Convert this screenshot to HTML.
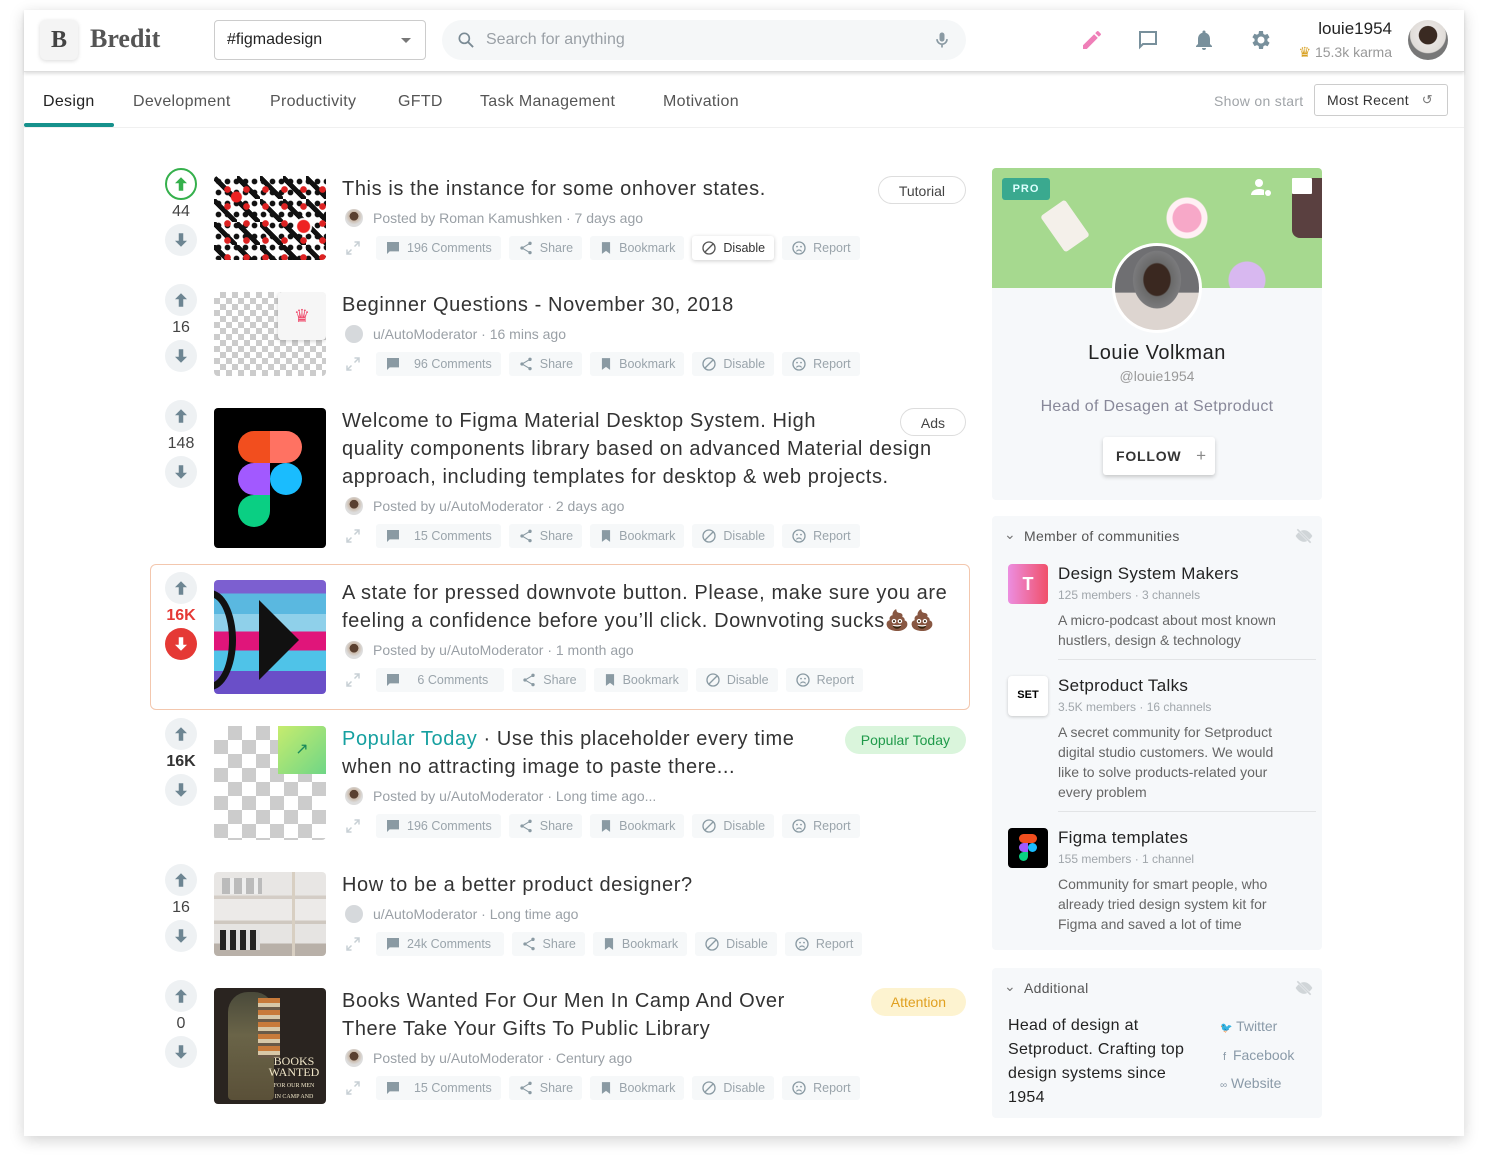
<!DOCTYPE html>
<html><head><meta charset="utf-8"><style>
*{box-sizing:border-box;margin:0;padding:0}
body{width:1488px;height:1176px;background:#fff;font-family:"Liberation Sans",sans-serif;position:relative;overflow:hidden;color:#333}
.frame{position:absolute;left:24px;top:10px;width:1440px;height:1126px;background:#fff;box-shadow:0 4px 14px rgba(0,0,0,.18)}
.abs{position:absolute}
.hdr{position:absolute;left:0;top:0;width:1440px;height:62px;border-bottom:1px solid #ddd;box-shadow:0 2px 3px rgba(0,0,0,.12);background:#fff}
.tabs span{position:absolute;top:83px;font-size:16px;color:#555;letter-spacing:.3px}
.post{position:absolute;left:150px;width:820px}
.vote{position:absolute;left:15px;width:32px;text-align:center}
.vbtn{width:32px;height:32px;border-radius:50%;background:#eef1f3;display:flex;align-items:center;justify-content:center}
.cnt{height:24px;line-height:24px;font-size:16px;color:#444;margin:0}
.thumb{position:absolute;left:64px;top:0;width:112px;border-radius:4px;overflow:hidden}
.body{position:absolute;left:192px;top:-1px}
.title{font-size:20px;line-height:28px;color:#333;letter-spacing:.6px;white-space:nowrap}
.meta{margin-top:2px;height:26px;display:flex;align-items:center;font-size:14px;color:#9aa0a6;white-space:nowrap}
.av{width:18px;height:18px;border-radius:50%;background:radial-gradient(circle at 50% 40%,#5a4030 30%,#c9b8a8 32%,#ddd 60%);margin-right:10px;margin-left:3px}
.av.g{background:#d6d9dc}
.acts{margin-top:5px;height:24px;display:flex;align-items:center;font-size:12.5px;color:#9aa4ab;white-space:nowrap}
.pill{height:24px;border-radius:3px;background:#f6f8f9;display:flex;align-items:center;padding:0 9px;margin-right:8px;gap:6px;white-space:nowrap}
.pill svg{fill:#8a9aa3}
.tag{position:absolute;right:4px;height:28px;border-radius:14px;padding:0 20px;font-size:14px;line-height:28px}
.chk{background:conic-gradient(#ccc 25%,#fff 0 50%,#ccc 0 75%,#fff 0)}
.card{position:absolute;background:#f6f8fa}
.comm{position:absolute;left:16px}
.clogo{position:absolute;left:0;width:40px;height:40px;border-radius:4px}
.cname{position:absolute;left:50px;font-size:17px;color:#222;white-space:nowrap;letter-spacing:.3px}
.cmeta{position:absolute;left:50px;font-size:12px;color:#a0a6ab;white-space:nowrap}
.cdesc{position:absolute;left:50px;font-size:14px;line-height:20px;color:#666;width:240px}
</style></head><body>
<div class="frame">
 <div class="hdr">
  <div class="abs" style="left:16px;top:10px;width:38px;height:40px;border-radius:6px;background:#f4f4f4;box-shadow:0 1px 4px rgba(0,0,0,.15);font:bold 24px 'Liberation Serif',serif;color:#444;text-align:center;line-height:40px">B</div>
  <div class="abs" style="left:66px;top:14px;font:bold 26px 'Liberation Serif',serif;color:#555">Bredit</div>
  <div class="abs" style="left:190px;top:10px;width:212px;height:40px;border:1px solid #ccc;border-radius:4px;font-size:16px;line-height:38px;padding-left:12px;color:#222">#figmadesign<span class="abs" style="right:14px;top:17px;border:5px solid transparent;border-top-color:#777;border-bottom:0"></span></div>
  <div class="abs" style="left:418px;top:10px;width:524px;height:40px;border-radius:20px;background:#f5f7f8;font-size:16px;line-height:40px;padding-left:44px;color:#9aa0a6">Search for anything
   <svg class="abs" style="left:14px;top:10px" width="20" height="20" viewBox="0 0 24 24"><circle cx="10" cy="10" r="6" fill="none" stroke="#7a8a94" stroke-width="2"/><path d="M14.5 14.5l6 6" stroke="#7a8a94" stroke-width="2.2"/></svg>
   <svg class="abs" style="right:14px;top:10px" width="20" height="20" viewBox="0 0 24 24"><rect x="9" y="3" width="6" height="11" rx="3" fill="#8a9aa3"/><path d="M6 11a6 6 0 0 0 12 0M12 17v4" fill="none" stroke="#8a9aa3" stroke-width="2"/></svg></div>
  <svg class="abs" style="left:1056px;top:18px" width="24" height="24" viewBox="0 0 24 24"><path d="M3 17.2V21h3.8L17.8 9.9 14.1 6.2zM20.7 7a1 1 0 0 0 0-1.4l-2.3-2.3a1 1 0 0 0-1.4 0l-1.8 1.8 3.7 3.7z" fill="#ef7fb8"/></svg>
  <svg class="abs" style="left:1112px;top:18px" width="24" height="24" viewBox="0 0 24 24"><path d="M4 4h16v12H7l-3 3z" fill="none" stroke="#78909c" stroke-width="2"/></svg>
  <svg class="abs" style="left:1168px;top:18px" width="24" height="24" viewBox="0 0 24 24"><path d="M12 22a2 2 0 0 0 2-2h-4a2 2 0 0 0 2 2zm6-6v-5c0-3-1.6-5.6-4.5-6.3V4a1.5 1.5 0 0 0-3 0v.7C7.6 5.4 6 8 6 11v5l-2 2v1h16v-1z" fill="#78909c"/></svg>
  <svg class="abs" style="left:1224px;top:18px" width="24" height="24" viewBox="0 0 24 24"><path d="M19.4 13a7.5 7.5 0 0 0 0-2l2.1-1.6-2-3.5-2.5 1a7 7 0 0 0-1.7-1L15 3h-4l-.4 2.7a7 7 0 0 0-1.7 1l-2.5-1-2 3.5L6.6 11a7.5 7.5 0 0 0 0 2l-2.1 1.6 2 3.5 2.5-1a7 7 0 0 0 1.7 1L11 21h4l.4-2.7a7 7 0 0 0 1.7-1l2.5 1 2-3.5zM13 15.5a3.5 3.5 0 1 1 0-7 3.5 3.5 0 0 1 0 7z" fill="#78909c"/></svg>
  <div class="abs" style="right:72px;top:9px;font-size:17px;color:#222">louie1954</div>
  <div class="abs" style="right:72px;top:34px;font-size:14px;color:#999"><span style="color:#d8a020">♛</span> 15.3k karma</div>
  <div class="abs" style="left:1384px;top:10px;width:40px;height:40px;border-radius:50%;background:radial-gradient(circle at 50% 38%,#3a2a22 28%,#e8e4e2 30%,#e0dcd8 55%,#777 58%)"></div>
 </div>
 <div class="tabs">
  <span style="left:19px;color:#222">Design</span><span style="left:109px">Development</span><span style="left:246px">Productivity</span><span style="left:374px">GFTD</span><span style="left:456px">Task Management</span><span style="left:639px">Motivation</span>
 </div>
 <div class="abs" style="left:0;top:113px;width:90px;height:4px;background:#16918c;border-radius:2px"></div>
 <div class="abs" style="left:0;top:117px;width:1440px;height:1px;background:#f0f0f0"></div>
 <div class="abs" style="left:1190px;top:83px;font-size:14px;color:#a0a4a8;letter-spacing:.3px">Show on start</div>
 <div class="abs" style="left:1290px;top:74px;width:134px;height:32px;border:1px solid #ccc;border-radius:3px;font-size:14px;line-height:30px;padding-left:12px;color:#333;letter-spacing:.3px">Most Recent <span style="position:absolute;right:14px;color:#777;font-size:13px">↺</span></div>
</div>

<!-- post 1 -->
<div class="post" style="top:176px">
 <div class="vote" style="top:-8px"><div class="vbtn" style="border:2px solid #35b04c;background:#fff"><svg width="18" height="18" viewBox="0 0 24 24"><path d="M12 3l-8 8h5v10h6V11h5z" fill="#35b04c"/></svg></div><div class="cnt">44</div><div class="vbtn"><svg width="18" height="18" viewBox="0 0 24 24"><path d="M12 21l8-8h-5V3H9v10H4z" fill="#6d8592"/></svg></div></div>
 <div class="thumb" style="height:84px;background:radial-gradient(circle at 20% 25%,#e22 5px,transparent 6px),radial-gradient(circle at 80% 60%,#e22 6px,#fff 7px,#fff 8px,transparent 9px),radial-gradient(circle,#d22 3px,transparent 3.6px) 4px 5px/19px 17px,radial-gradient(circle,#111 2.5px,transparent 3.2px) 0 0/9px 11px,linear-gradient(45deg,transparent 40%,#111 40% 55%,transparent 55%) 0 0/23px 23px,#fff"></div>
 <div class="body"><div class="title">This is the instance for some onhover states.</div>
  <div class="meta"><div class="av"></div>Posted by Roman Kamushken · 7 days ago</div>
  <div class="acts"><svg width="18" height="18" viewBox="0 0 24 24" style="margin:0 14px 0 2px"><path d="M14 4h6v6M20 4l-6 6M10 20H4v-6M4 20l6-6" stroke="#c8d0d5" stroke-width="2" fill="none"/></svg>
   <div class="pill"><svg width="16" height="16" viewBox="0 0 24 24"><path d="M3 3h18v14H7l-4 4z"/></svg>196 Comments</div>
   <div class="pill"><svg width="16" height="16" viewBox="0 0 24 24"><circle cx="18" cy="5" r="2.5"/><circle cx="6" cy="12" r="2.5"/><circle cx="18" cy="19" r="2.5"/><path d="M18 5L6 12l12 7" stroke="#8a9aa3" stroke-width="1.6" fill="none"/></svg>Share</div>
   <div class="pill"><svg width="14" height="16" viewBox="0 0 24 24"><path d="M5 2h14v20l-7-5-7 5z"/></svg>Bookmark</div>
   <div class="pill" style="background:#fff;box-shadow:0 1px 4px rgba(0,0,0,.2);color:#333"><svg width="16" height="16" viewBox="0 0 24 24"><circle cx="12" cy="12" r="9" fill="none" stroke="#555" stroke-width="2"/><path d="M6 18L18 6" stroke="#555" stroke-width="2"/></svg>Disable</div>
   <div class="pill"><svg width="16" height="16" viewBox="0 0 24 24"><circle cx="12" cy="12" r="9" fill="none" stroke="#8a9aa3" stroke-width="2"/><circle cx="9" cy="10" r="1.3"/><circle cx="15" cy="10" r="1.3"/><path d="M8 17q4-4 8 0" stroke="#8a9aa3" stroke-width="1.6" fill="none"/></svg>Report</div></div>
 </div>
 <div class="tag" style="top:0;border:1px solid #ddd;color:#444">Tutorial</div>
</div>

<!-- post 2 -->
<div class="post" style="top:292px">
 <div class="vote" style="top:-8px"><div class="vbtn"><svg width="18" height="18" viewBox="0 0 24 24"><path d="M12 3l-8 8h5v10h6V11h5z" fill="#6d8592"/></svg></div><div class="cnt">16</div><div class="vbtn"><svg width="18" height="18" viewBox="0 0 24 24"><path d="M12 21l8-8h-5V3H9v10H4z" fill="#6d8592"/></svg></div></div>
 <div class="thumb chk" style="height:84px;background-size:12px 12px"><div class="abs" style="left:64px;top:0;width:48px;height:48px;background:#f6f6f6;border-radius:4px;box-shadow:0 1px 4px rgba(0,0,0,.2);color:#ef4f6f;text-align:center;line-height:48px;font-size:18px">♛</div></div>
 <div class="body"><div class="title">Beginner Questions - November 30, 2018</div>
  <div class="meta"><div class="av g"></div>u/AutoModerator · 16 mins ago</div>
  <div class="acts"><svg width="18" height="18" viewBox="0 0 24 24" style="margin:0 14px 0 2px"><path d="M14 4h6v6M20 4l-6 6M10 20H4v-6M4 20l6-6" stroke="#c8d0d5" stroke-width="2" fill="none"/></svg>
   <div class="pill"><svg width="16" height="16" viewBox="0 0 24 24"><path d="M3 3h18v14H7l-4 4z"/></svg>&nbsp;&nbsp;96 Comments</div>
   <div class="pill"><svg width="16" height="16" viewBox="0 0 24 24"><circle cx="18" cy="5" r="2.5"/><circle cx="6" cy="12" r="2.5"/><circle cx="18" cy="19" r="2.5"/><path d="M18 5L6 12l12 7" stroke="#8a9aa3" stroke-width="1.6" fill="none"/></svg>Share</div>
   <div class="pill"><svg width="14" height="16" viewBox="0 0 24 24"><path d="M5 2h14v20l-7-5-7 5z"/></svg>Bookmark</div>
   <div class="pill"><svg width="16" height="16" viewBox="0 0 24 24"><circle cx="12" cy="12" r="9" fill="none" stroke="#8a9aa3" stroke-width="2"/><path d="M6 18L18 6" stroke="#8a9aa3" stroke-width="2"/></svg>Disable</div>
   <div class="pill"><svg width="16" height="16" viewBox="0 0 24 24"><circle cx="12" cy="12" r="9" fill="none" stroke="#8a9aa3" stroke-width="2"/><circle cx="9" cy="10" r="1.3"/><circle cx="15" cy="10" r="1.3"/><path d="M8 17q4-4 8 0" stroke="#8a9aa3" stroke-width="1.6" fill="none"/></svg>Report</div></div>
 </div>
</div>

<!-- post 3 -->
<div class="post" style="top:408px">
 <div class="vote" style="top:-8px"><div class="vbtn"><svg width="18" height="18" viewBox="0 0 24 24"><path d="M12 3l-8 8h5v10h6V11h5z" fill="#6d8592"/></svg></div><div class="cnt">148</div><div class="vbtn"><svg width="18" height="18" viewBox="0 0 24 24"><path d="M12 21l8-8h-5V3H9v10H4z" fill="#6d8592"/></svg></div></div>
 <div class="thumb" style="height:140px;background:#000">
  <div class="abs" style="left:24px;top:23px;width:32px;height:32px;background:#f24e1e;border-radius:16px 0 0 16px"></div>
  <div class="abs" style="left:56px;top:23px;width:32px;height:32px;background:#ff7262;border-radius:0 16px 16px 0"></div>
  <div class="abs" style="left:24px;top:55px;width:32px;height:32px;background:#a259ff;border-radius:16px 0 0 16px"></div>
  <div class="abs" style="left:56px;top:55px;width:32px;height:32px;background:#1abcfe;border-radius:50%"></div>
  <div class="abs" style="left:24px;top:87px;width:32px;height:32px;background:#0acf83;border-radius:16px 0 16px 16px"></div>
 </div>
 <div class="body"><div class="title">Welcome to Figma Material Desktop System. High<br>quality components library based on advanced Material design<br>approach, including templates for desktop &amp; web projects.</div>
  <div class="meta"><div class="av"></div>Posted by u/AutoModerator · 2 days ago</div>
  <div class="acts"><svg width="18" height="18" viewBox="0 0 24 24" style="margin:0 14px 0 2px"><path d="M14 4h6v6M20 4l-6 6M10 20H4v-6M4 20l6-6" stroke="#c8d0d5" stroke-width="2" fill="none"/></svg>
   <div class="pill"><svg width="16" height="16" viewBox="0 0 24 24"><path d="M3 3h18v14H7l-4 4z"/></svg>&nbsp;&nbsp;15 Comments</div>
   <div class="pill"><svg width="16" height="16" viewBox="0 0 24 24"><circle cx="18" cy="5" r="2.5"/><circle cx="6" cy="12" r="2.5"/><circle cx="18" cy="19" r="2.5"/><path d="M18 5L6 12l12 7" stroke="#8a9aa3" stroke-width="1.6" fill="none"/></svg>Share</div>
   <div class="pill"><svg width="14" height="16" viewBox="0 0 24 24"><path d="M5 2h14v20l-7-5-7 5z"/></svg>Bookmark</div>
   <div class="pill"><svg width="16" height="16" viewBox="0 0 24 24"><circle cx="12" cy="12" r="9" fill="none" stroke="#8a9aa3" stroke-width="2"/><path d="M6 18L18 6" stroke="#8a9aa3" stroke-width="2"/></svg>Disable</div>
   <div class="pill"><svg width="16" height="16" viewBox="0 0 24 24"><circle cx="12" cy="12" r="9" fill="none" stroke="#8a9aa3" stroke-width="2"/><circle cx="9" cy="10" r="1.3"/><circle cx="15" cy="10" r="1.3"/><path d="M8 17q4-4 8 0" stroke="#8a9aa3" stroke-width="1.6" fill="none"/></svg>Report</div></div>
 </div>
 <div class="tag" style="top:0;border:1px solid #ddd;color:#444">Ads</div>
</div>

<!-- post 4 highlighted -->
<div class="abs" style="left:150px;top:564px;width:820px;height:146px;border:1px solid #f3c7ae;border-radius:6px"></div>
<div class="post" style="top:580px">
 <div class="vote" style="top:-8px"><div class="vbtn"><svg width="18" height="18" viewBox="0 0 24 24"><path d="M12 3l-8 8h5v10h6V11h5z" fill="#6d8592"/></svg></div><div class="cnt" style="color:#e53935;font-weight:bold">16K</div><div class="vbtn" style="background:#e53935"><svg width="18" height="18" viewBox="0 0 24 24"><path d="M12 21l8-8h-5V3H9v10H4z" fill="#fff"/></svg></div></div>
 <div class="thumb" style="height:114px;background:linear-gradient(180deg,#7c5fd0 0 12%,#5ab8e0 12% 30%,#8fd0ea 30% 45%,#e0157a 45% 62%,#4fc3e8 62% 80%,#6a4fc8 80%)">
  <div class="abs" style="left:-30px;top:10px;width:52px;height:100px;border:7px solid #111;border-radius:50%"></div>
  <div class="abs" style="left:45px;top:20px;width:0;height:0;border-top:40px solid transparent;border-bottom:40px solid transparent;border-left:40px solid #111"></div>
 </div>
 <div class="body"><div class="title">A state for pressed downvote button. Please, make sure you are<br>feeling a confidence before you’ll click. Downvoting sucks<span style="color:#8a5a2a;letter-spacing:0">💩💩</span></div>
  <div class="meta"><div class="av"></div>Posted by u/AutoModerator · 1 month ago</div>
  <div class="acts"><svg width="18" height="18" viewBox="0 0 24 24" style="margin:0 14px 0 2px"><path d="M14 4h6v6M20 4l-6 6M10 20H4v-6M4 20l6-6" stroke="#c8d0d5" stroke-width="2" fill="none"/></svg>
   <div class="pill"><svg width="16" height="16" viewBox="0 0 24 24"><path d="M3 3h18v14H7l-4 4z"/></svg>&nbsp;&nbsp;&nbsp;6 Comments&nbsp;&nbsp;</div>
   <div class="pill"><svg width="16" height="16" viewBox="0 0 24 24"><circle cx="18" cy="5" r="2.5"/><circle cx="6" cy="12" r="2.5"/><circle cx="18" cy="19" r="2.5"/><path d="M18 5L6 12l12 7" stroke="#8a9aa3" stroke-width="1.6" fill="none"/></svg>Share</div>
   <div class="pill"><svg width="14" height="16" viewBox="0 0 24 24"><path d="M5 2h14v20l-7-5-7 5z"/></svg>Bookmark</div>
   <div class="pill"><svg width="16" height="16" viewBox="0 0 24 24"><circle cx="12" cy="12" r="9" fill="none" stroke="#8a9aa3" stroke-width="2"/><path d="M6 18L18 6" stroke="#8a9aa3" stroke-width="2"/></svg>Disable</div>
   <div class="pill"><svg width="16" height="16" viewBox="0 0 24 24"><circle cx="12" cy="12" r="9" fill="none" stroke="#8a9aa3" stroke-width="2"/><circle cx="9" cy="10" r="1.3"/><circle cx="15" cy="10" r="1.3"/><path d="M8 17q4-4 8 0" stroke="#8a9aa3" stroke-width="1.6" fill="none"/></svg>Report</div></div>
 </div>
</div>

<!-- post 5 -->
<div class="post" style="top:726px">
 <div class="vote" style="top:-8px"><div class="vbtn"><svg width="18" height="18" viewBox="0 0 24 24"><path d="M12 3l-8 8h5v10h6V11h5z" fill="#6d8592"/></svg></div><div class="cnt" style="font-weight:bold;color:#333">16K</div><div class="vbtn"><svg width="18" height="18" viewBox="0 0 24 24"><path d="M12 21l8-8h-5V3H9v10H4z" fill="#6d8592"/></svg></div></div>
 <div class="thumb chk" style="height:114px;background-size:28px 28px"><div class="abs" style="left:64px;top:0;width:48px;height:48px;background:linear-gradient(135deg,#c6ec6e,#6fd686);color:#1a8a5a;text-align:center;line-height:48px;font-size:16px">↗</div></div>
 <div class="body"><div class="title"><span style="color:#16a0a0">Popular Today</span> · Use this placeholder every time<br>when no attracting image to paste there...</div>
  <div class="meta"><div class="av"></div>Posted by u/AutoModerator · Long time ago...</div>
  <div class="acts"><svg width="18" height="18" viewBox="0 0 24 24" style="margin:0 14px 0 2px"><path d="M14 4h6v6M20 4l-6 6M10 20H4v-6M4 20l6-6" stroke="#c8d0d5" stroke-width="2" fill="none"/></svg>
   <div class="pill"><svg width="16" height="16" viewBox="0 0 24 24"><path d="M3 3h18v14H7l-4 4z"/></svg>196 Comments</div>
   <div class="pill"><svg width="16" height="16" viewBox="0 0 24 24"><circle cx="18" cy="5" r="2.5"/><circle cx="6" cy="12" r="2.5"/><circle cx="18" cy="19" r="2.5"/><path d="M18 5L6 12l12 7" stroke="#8a9aa3" stroke-width="1.6" fill="none"/></svg>Share</div>
   <div class="pill"><svg width="14" height="16" viewBox="0 0 24 24"><path d="M5 2h14v20l-7-5-7 5z"/></svg>Bookmark</div>
   <div class="pill"><svg width="16" height="16" viewBox="0 0 24 24"><circle cx="12" cy="12" r="9" fill="none" stroke="#8a9aa3" stroke-width="2"/><path d="M6 18L18 6" stroke="#8a9aa3" stroke-width="2"/></svg>Disable</div>
   <div class="pill"><svg width="16" height="16" viewBox="0 0 24 24"><circle cx="12" cy="12" r="9" fill="none" stroke="#8a9aa3" stroke-width="2"/><circle cx="9" cy="10" r="1.3"/><circle cx="15" cy="10" r="1.3"/><path d="M8 17q4-4 8 0" stroke="#8a9aa3" stroke-width="1.6" fill="none"/></svg>Report</div></div>
 </div>
 <div class="tag" style="top:0;background:#daf5dc;color:#1f9a4a;padding:0 16px">Popular Today</div>
</div>

<!-- post 6 -->
<div class="post" style="top:872px">
 <div class="vote" style="top:-8px"><div class="vbtn"><svg width="18" height="18" viewBox="0 0 24 24"><path d="M12 3l-8 8h5v10h6V11h5z" fill="#6d8592"/></svg></div><div class="cnt">16</div><div class="vbtn"><svg width="18" height="18" viewBox="0 0 24 24"><path d="M12 21l8-8h-5V3H9v10H4z" fill="#6d8592"/></svg></div></div>
 <div class="thumb" style="height:84px;background:linear-gradient(180deg,#e8e6e4 0 28%,#d4cdc6 28% 32%,#eceae8 32% 58%,#cfc8c0 58% 62%,#e6e4e2 62% 85%,#b8b0a8 85%)">
  <div class="abs" style="left:8px;top:6px;width:40px;height:16px;background:repeating-linear-gradient(90deg,#bbb 0 8px,#eee 8px 12px)"></div>
  <div class="abs" style="left:6px;top:58px;width:40px;height:20px;background:repeating-linear-gradient(90deg,#222 0 6px,#ddd 6px 10px)"></div>
  <div class="abs" style="left:78px;top:0;width:3px;height:84px;background:#d8cfc2"></div>
 </div>
 <div class="body"><div class="title">How to be a better product designer?</div>
  <div class="meta"><div class="av g"></div>u/AutoModerator · Long time ago</div>
  <div class="acts"><svg width="18" height="18" viewBox="0 0 24 24" style="margin:0 14px 0 2px"><path d="M14 4h6v6M20 4l-6 6M10 20H4v-6M4 20l6-6" stroke="#c8d0d5" stroke-width="2" fill="none"/></svg>
   <div class="pill"><svg width="16" height="16" viewBox="0 0 24 24"><path d="M3 3h18v14H7l-4 4z"/></svg>24k Comments&nbsp;</div>
   <div class="pill"><svg width="16" height="16" viewBox="0 0 24 24"><circle cx="18" cy="5" r="2.5"/><circle cx="6" cy="12" r="2.5"/><circle cx="18" cy="19" r="2.5"/><path d="M18 5L6 12l12 7" stroke="#8a9aa3" stroke-width="1.6" fill="none"/></svg>Share</div>
   <div class="pill"><svg width="14" height="16" viewBox="0 0 24 24"><path d="M5 2h14v20l-7-5-7 5z"/></svg>Bookmark</div>
   <div class="pill"><svg width="16" height="16" viewBox="0 0 24 24"><circle cx="12" cy="12" r="9" fill="none" stroke="#8a9aa3" stroke-width="2"/><path d="M6 18L18 6" stroke="#8a9aa3" stroke-width="2"/></svg>Disable</div>
   <div class="pill"><svg width="16" height="16" viewBox="0 0 24 24"><circle cx="12" cy="12" r="9" fill="none" stroke="#8a9aa3" stroke-width="2"/><circle cx="9" cy="10" r="1.3"/><circle cx="15" cy="10" r="1.3"/><path d="M8 17q4-4 8 0" stroke="#8a9aa3" stroke-width="1.6" fill="none"/></svg>Report</div></div>
 </div>
</div>

<!-- post 7 -->
<div class="post" style="top:988px">
 <div class="vote" style="top:-8px"><div class="vbtn"><svg width="18" height="18" viewBox="0 0 24 24"><path d="M12 3l-8 8h5v10h6V11h5z" fill="#6d8592"/></svg></div><div class="cnt">0</div><div class="vbtn"><svg width="18" height="18" viewBox="0 0 24 24"><path d="M12 21l8-8h-5V3H9v10H4z" fill="#6d8592"/></svg></div></div>
 <div class="thumb" style="height:116px;background:#2a2420">
  <div class="abs" style="left:14px;top:4px;width:46px;height:108px;background:linear-gradient(180deg,#4a4a3a,#6a6448 40%,#5a5038);border-radius:20px 20px 4px 4px"></div>
  <div class="abs" style="left:44px;top:10px;width:22px;height:60px;background:repeating-linear-gradient(180deg,#c87a3a 0 5px,#d8c8a8 5px 9px,#6a5a48 9px 12px)"></div>
  <div class="abs" style="left:50px;top:68px;font:12px/11px 'Liberation Serif',serif;color:#f0e6c8;text-align:center;width:60px">BOOKS<br>WANTED<br><span style="font-size:6px;line-height:6px">FOR OUR MEN<br>IN CAMP AND<br>OVER THERE</span></div>
 </div>
 <div class="body"><div class="title">Books Wanted For Our Men In Camp And Over<br>There Take Your Gifts To Public Library</div>
  <div class="meta"><div class="av"></div>Posted by u/AutoModerator · Century ago</div>
  <div class="acts"><svg width="18" height="18" viewBox="0 0 24 24" style="margin:0 14px 0 2px"><path d="M14 4h6v6M20 4l-6 6M10 20H4v-6M4 20l6-6" stroke="#c8d0d5" stroke-width="2" fill="none"/></svg>
   <div class="pill"><svg width="16" height="16" viewBox="0 0 24 24"><path d="M3 3h18v14H7l-4 4z"/></svg>&nbsp;&nbsp;15 Comments</div>
   <div class="pill"><svg width="16" height="16" viewBox="0 0 24 24"><circle cx="18" cy="5" r="2.5"/><circle cx="6" cy="12" r="2.5"/><circle cx="18" cy="19" r="2.5"/><path d="M18 5L6 12l12 7" stroke="#8a9aa3" stroke-width="1.6" fill="none"/></svg>Share</div>
   <div class="pill"><svg width="14" height="16" viewBox="0 0 24 24"><path d="M5 2h14v20l-7-5-7 5z"/></svg>Bookmark</div>
   <div class="pill"><svg width="16" height="16" viewBox="0 0 24 24"><circle cx="12" cy="12" r="9" fill="none" stroke="#8a9aa3" stroke-width="2"/><path d="M6 18L18 6" stroke="#8a9aa3" stroke-width="2"/></svg>Disable</div>
   <div class="pill"><svg width="16" height="16" viewBox="0 0 24 24"><circle cx="12" cy="12" r="9" fill="none" stroke="#8a9aa3" stroke-width="2"/><circle cx="9" cy="10" r="1.3"/><circle cx="15" cy="10" r="1.3"/><path d="M8 17q4-4 8 0" stroke="#8a9aa3" stroke-width="1.6" fill="none"/></svg>Report</div></div>
 </div>
 <div class="tag" style="top:0;background:#fdf3d0;color:#e0a020">Attention</div>
</div>

<!-- profile card -->
<div class="card" style="left:992px;top:168px;width:330px;height:332px;border-radius:4px;overflow:hidden">
 <div class="abs" style="left:0;top:0;width:330px;height:120px;background:radial-gradient(circle at 195px 50px,#f7a8c8 14px,#fff0f4 15px,#fff0f4 20px,transparent 21px),radial-gradient(circle at 255px 112px,#d8b8f0 18px,transparent 19px),#a6d98f"></div>
 <div class="abs" style="left:58px;top:36px;width:30px;height:44px;background:#f4f0ea;transform:rotate(-35deg);border-radius:3px"></div>
 <div class="abs" style="left:300px;top:10px;width:30px;height:60px;background:#5a4040;border-radius:8px 0 0 8px"></div>
 <div class="abs" style="left:10px;top:10px;width:48px;height:22px;background:#3aa98f;border-radius:3px;color:#dff;font-size:11px;font-weight:bold;letter-spacing:1px;text-align:center;line-height:22px">PRO</div>
 <svg class="abs" style="left:258px;top:8px" width="24" height="24" viewBox="0 0 24 24"><circle cx="9" cy="7" r="4" fill="#fff"/><path d="M1 19c0-4 4-6 8-6s5 1 5 1v5z" fill="#fff"/><circle cx="18" cy="17" r="3" fill="#fff"/></svg>
 <div class="abs" style="left:300px;top:10px;width:20px;height:16px;background:#fff;border-radius:1px"></div>
 <div class="abs" style="left:120px;top:75px;width:90px;height:90px;border-radius:50%;border:3px solid #fff;background:radial-gradient(ellipse at 50% 40%,#3a2820 22%,#6a6a6a 24%,#7a7a7c 40%,transparent 41%),linear-gradient(180deg,#6f6f72 55%,#ddd5d0 56%)"></div>
 <div class="abs" style="left:0;top:174px;width:330px;text-align:center;font-size:20px;color:#222;letter-spacing:.5px">Louie Volkman</div>
 <div class="abs" style="left:0;top:200px;width:330px;text-align:center;font-size:14px;color:#999">@louie1954</div>
 <div class="abs" style="left:0;top:230px;width:330px;text-align:center;font-size:16px;color:#889;letter-spacing:.3px">Head of Desagen at Setproduct</div>
 <div class="abs" style="left:111px;top:269px;width:112px;height:38px;background:#fff;border-radius:3px;box-shadow:0 2px 4px rgba(0,0,0,.2);font-size:14px;font-weight:bold;letter-spacing:.8px;line-height:38px;padding-left:13px;color:#333">FOLLOW <span style="font-weight:normal;color:#888;margin-left:10px;font-size:17px">+</span></div>
</div>

<!-- communities -->
<div class="card" style="left:992px;top:516px;width:330px;height:434px;border-radius:4px">
 <div class="abs" style="left:12px;top:10px;font-size:14px;color:#777">⌄</div>
 <div class="abs" style="left:32px;top:12px;font-size:14px;color:#555;letter-spacing:.3px">Member of communities</div>
 <svg class="abs" style="left:302px;top:10px" width="20" height="20" viewBox="0 0 24 24"><path d="M2 12s4-7 10-7 10 7 10 7-4 7-10 7S2 12 2 12z" fill="#d0d5d8"/><path d="M3 3l18 18" stroke="#f6f8fa" stroke-width="3"/><path d="M4 4l16 16" stroke="#d0d5d8" stroke-width="2"/></svg>
 <div class="comm" style="top:48px">
  <div class="clogo" style="top:0;background:linear-gradient(90deg,#ec8ee0,#f0506a);color:#fff;font-weight:bold;text-align:center;line-height:40px;font-size:18px">T</div>
  <div class="cname" style="top:0">Design System Makers</div>
  <div class="cmeta" style="top:24px">125 members · 3 channels</div>
  <div class="cdesc" style="top:46px">A micro-podcast about most known hustlers, design &amp; technology</div>
  <div class="abs" style="left:50px;top:95px;width:258px;height:1px;background:#e2e4e6"></div>
 </div>
 <div class="comm" style="top:160px">
  <div class="clogo" style="top:0;background:#fff;box-shadow:0 1px 3px rgba(0,0,0,.2);font:900 11px 'Liberation Sans';text-align:center;line-height:38px;color:#000">SET</div>
  <div class="cname" style="top:0">Setproduct Talks</div>
  <div class="cmeta" style="top:24px">3.5K members · 16 channels</div>
  <div class="cdesc" style="top:46px">A secret community for Setproduct digital studio customers. We would like to solve products-related your every problem</div>
  <div class="abs" style="left:50px;top:135px;width:258px;height:1px;background:#e2e4e6"></div>
 </div>
 <div class="comm" style="top:312px">
  <div class="clogo" style="top:0;background:#000"><div class="abs" style="left:11px;top:6px;width:18px;height:9px;background:#f24e1e;border-radius:5px"></div><div class="abs" style="left:11px;top:15px;width:9px;height:9px;background:#a259ff;border-radius:5px 0 0 5px"></div><div class="abs" style="left:20px;top:15px;width:9px;height:9px;background:#1abcfe;border-radius:50%"></div><div class="abs" style="left:11px;top:24px;width:9px;height:9px;background:#0acf83;border-radius:5px 0 5px 5px"></div></div>
  <div class="cname" style="top:0">Figma templates</div>
  <div class="cmeta" style="top:24px">155 members · 1 channel</div>
  <div class="cdesc" style="top:46px">Community for smart people, who already tried design system kit for Figma and saved a lot of time</div>
 </div>
</div>

<!-- additional -->
<div class="card" style="left:992px;top:968px;width:330px;height:150px;border-radius:4px">
 <div class="abs" style="left:12px;top:10px;font-size:14px;color:#777">⌄</div>
 <div class="abs" style="left:32px;top:12px;font-size:14px;color:#555;letter-spacing:.3px">Additional</div>
 <svg class="abs" style="left:302px;top:10px" width="20" height="20" viewBox="0 0 24 24"><path d="M2 12s4-7 10-7 10 7 10 7-4 7-10 7S2 12 2 12z" fill="#d0d5d8"/><path d="M3 3l18 18" stroke="#f6f8fa" stroke-width="3"/><path d="M4 4l16 16" stroke="#d0d5d8" stroke-width="2"/></svg>
 <div class="abs" style="left:16px;top:46px;width:185px;font-size:16px;line-height:24px;color:#222;letter-spacing:.3px">Head of design at Setproduct. Crafting top design systems since 1954</div>
 <div class="abs" style="left:228px;top:45px;font-size:14px;line-height:26px;color:#8a9aa8"><span style="font-size:10px">🐦</span> Twitter<br><span style="font-size:11px;margin:0 3px">f</span> Facebook<br><span style="font-size:10px">∞</span> Website</div>
</div>
</body></html>
